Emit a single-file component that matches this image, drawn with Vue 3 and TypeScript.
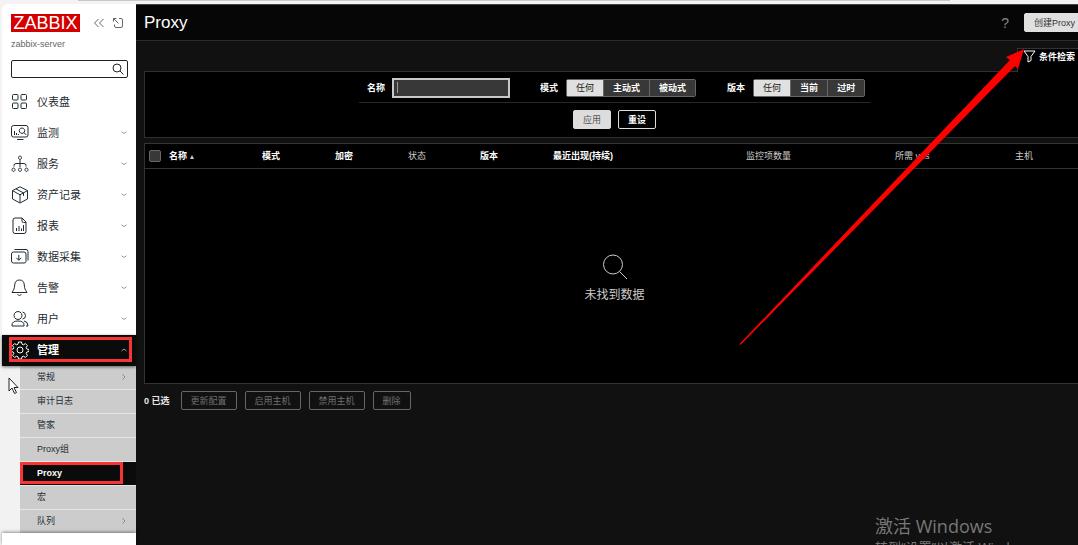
<script setup lang="ts">
import { ref } from 'vue'

interface MenuItem {
  id: string
  label: string
  expandable: boolean
  paths: string[]
}

const menu: MenuItem[] = [
  { id: 'dashboard', label: '仪表盘', expandable: false, paths: ['M2.500 1.500h3.500q1 0 1 1v3.500q0 1-1 1h-3.500q-1 0-1-1v-3.500q0-1 1-1z', 'M11 1.500h3.500q1 0 1 1v3.500q0 1-1 1h-3.500q-1 0-1-1v-3.500q0-1 1-1z', 'M2.500 10h3.500q1 0 1 1v3.500q0 1-1 1h-3.500q-1 0-1-1v-3.500q0-1 1-1z', 'M11 10h3.500q1 0 1 1v3.500q0 1-1 1h-3.500q-1 0-1-1v-3.500q0-1 1-1z'] },
  { id: 'monitoring', label: '监测', expandable: true, paths: ['M2.500 1.500h12.500q2 0 2 2v7.500q0 2-2 2h-12.500q-2 0-2-2v-7.500q0-2 2-2z', 'M6 15.500h6.500', 'M3.500 7v4M5.500 9v2M7.500 10v1', 'M11 4a2.700 2.700 0 1 0 .01 0M12.800 8.500l2.500 2.500'] },
  { id: 'services', label: '服务', expandable: true, paths: ['M9 1a1.500 1.700 0 1 0 .01 0', 'M9 4.500v7.500M3 11.500v-1q0-2 2-2h8q2 0 2 2v1', 'M2.500 13a1.500 1.700 0 1 0 .01 0', 'M9 13a1.500 1.700 0 1 0 .01 0', 'M15.500 13a1.500 1.700 0 1 0 .01 0'] },
  { id: 'inventory', label: '资产记录', expandable: true, paths: ['M9 .8l7.500 3.800v8.400l-7.500 4-7.500-4v-8.400z', 'M1.500 4.600l7.500 4.200 7.500-4.200M9 8.800v8.200', 'M5 2.900l7.500 4v3'] },
  { id: 'reports', label: '报表', expandable: true, paths: ['M4 1h7l4 4v9.500q0 2-2 2h-9q-2 0-2-2v-11.500q0-2 2-2z', 'M11 1v3q0 1.500 1.500 1.500h2.500', 'M5.500 11v3M8 9v5M10.500 11.500v2.500M12.500 8v6'] },
  { id: 'collection', label: '数据采集', expandable: true, paths: ['M2.500 4h10.500q2 0 2 2v7.500q0 1.500-2 1.500h-10.500q-2 0-2-2v-7q0-2 2-2z', 'M3.500 1.500h11.500q2 0 2 2v9', 'M7.800 7v5M5.300 9.800l2.500 2.500 2.500-2.500'] },
  { id: 'alerts', label: '告警', expandable: true, paths: ['M8.500 1q4.500 0 4.800 5c.2 3.500 1 5 2.700 7.500h-15c1.700-2.500 2.500-4 2.700-7.500q.3-5 4.800-5z', 'M6.500 15.500q2 2 4 0'] },
  { id: 'users', label: '用户', expandable: true, paths: ['M7 1.500a4 4 0 1 0 .01 0', 'M1 16v-1q0-4 6-4t6 4v1z', 'M11.500 2q3 .5 3 3.700t-3 3.300', 'M13 11q4 .5 4 5h-2'] }
]

const submenu = [
  { label: '常规', more: true },
  { label: '审计日志', more: false },
  { label: '管家', more: false },
  { label: 'Proxy组', more: false },
  { label: 'Proxy', more: false },
  { label: '宏', more: false },
  { label: '队列', more: true }
]

const columns = [
  { label: '模式', cls: 'c-mode', strong: true },
  { label: '加密', cls: 'c-enc', strong: true },
  { label: '状态', cls: 'c-state', strong: false },
  { label: '版本', cls: 'c-ver', strong: true },
  { label: '最近出现(持续)', cls: 'c-seen', strong: true },
  { label: '监控项数量', cls: 'c-items', strong: false },
  { label: '所需 vps', cls: 'c-vps', strong: false },
  { label: '主机', cls: 'c-hosts', strong: false }
]

const modes = ['任何', '主动式', '被动式']
const versions = ['任何', '当前', '过时']
const actions = ['更新配置', '启用主机', '禁用主机', '删除']

const mode = ref(0)
const version = ref(0)
const name = ref('')
const search = ref('')
</script>

<template>
  <div class="page">
    <div class="strip"><div class="strip-line"></div></div>
    <div class="layout">
      <aside class="sidebar">
        <div class="brand">
          <a class="logo" href="#">ZABBIX</a>
          <button class="tool first" aria-label="收起侧边栏">
            <svg width="12" height="12" viewBox="0 0 12 12"><path d="M5.500 2l-4 4 4 4M10.500 2l-4 4 4 4" /></svg>
          </button>
          <button class="tool" aria-label="隐藏侧边栏">
            <svg width="12" height="12" viewBox="0 0 12 12"><path d="M7 1.500h2q1.500 0 1.500 1.500v6q0 1.500-1.500 1.500h-5q-1.500 0-1.500-1.500v-1.500M1.500 4.500v-3h3M1.500 1.500l5 5" /></svg>
          </button>
        </div>
        <div class="server">zabbix-server</div>
        <form class="search" @submit.prevent>
          <input v-model="search" type="text" aria-label="搜索" />
          <button aria-label="搜索">
            <svg width="14" height="14" viewBox="0 0 14 14"><circle cx="6" cy="6" r="4" /><path d="M9 9l3.500 3.500" /></svg>
          </button>
        </form>
        <nav>
          <a v-for="item in menu" :key="item.id" class="item" href="#">
            <svg class="icon" width="18" height="18" viewBox="0 0 18 18"><path v-for="(d, i) in item.paths" :key="i" :d="d" /></svg>
            <span>{{ item.label }}</span>
            <svg v-if="item.expandable" class="chev" width="6" height="4" viewBox="0 0 6 4"><path d="M.5 .8l2.500 1.700 2.500-1.700" /></svg>
          </a>
          <a class="item current" href="#">
            <svg class="icon" width="18" height="18" viewBox="0 0 18 18">
              <path d="M7.500 1h3l.5 2.200 1.400.6 2-1.200 2 2-1.200 2 .6 1.400 2.200.5v2l-2.200.5-.6 1.400 1.200 2-2 2-2-1.200-1.400.6-.5 2.200h-3l-.5-2.200-1.400-.6-2 1.200-2-2 1.200-2-.6-1.400-2.200-.5v-2l2.200-.5.6-1.400-1.200-2 2-2 2 1.200 1.400-.6z" />
              <circle cx="9" cy="9" r="3" />
            </svg>
            <span>管理</span>
            <svg class="chev" width="6" height="4" viewBox="0 0 6 4"><path d="M.5 3l2.500-2 2.500 2" /></svg>
            <i class="mark mark-admin"></i>
          </a>
          <div class="submenu">
            <a v-for="s in submenu" :key="s.label" class="sub" :class="{ active: s.label === 'Proxy' }" href="#">
              <span>{{ s.label }}</span>
              <svg v-if="s.more" width="4" height="6" viewBox="0 0 4 6"><path d="M.5 .5l2.500 2.500-2.500 2.500" /></svg>
              <i v-if="s.label === 'Proxy'" class="mark mark-proxy"></i>
            </a>
          </div>
        </nav>
        <div class="foot"></div>
      </aside>

      <main class="main">
        <header class="head">
          <h1>Proxy</h1>
          <a class="help" href="#" aria-label="帮助">?</a>
          <button class="create">创建Proxy</button>
        </header>

        <div class="tabs">
          <button class="tab">
            <svg width="13" height="13" viewBox="0 0 13 13"><path d="M1 1h11l-4 5.500v4l-3 1.500v-5.500z" /></svg>
            <span>条件检索</span>
          </button>
        </div>
        <form class="filter" @submit.prevent>
          <div class="fields">
            <label for="name">名称</label>
            <div class="text"><input id="name" v-model="name" type="text" /><i class="caret"></i></div>
            <span class="legend">模式</span>
            <div class="seg" role="group" aria-label="模式">
              <label v-for="(m, i) in modes" :key="m" :class="{ on: mode === i }"><input v-model="mode" type="radio" name="mode" :value="i" />{{ m }}</label>
            </div>
            <span class="legend">版本</span>
            <div class="seg" role="group" aria-label="版本">
              <label v-for="(v, i) in versions" :key="v" :class="{ on: version === i }"><input v-model="version" type="radio" name="version" :value="i" />{{ v }}</label>
            </div>
          </div>
          <div class="submit">
            <button class="apply">应用</button>
            <button class="reset" type="button">重设</button>
          </div>
        </form>

        <section class="list">
          <table>
            <thead>
              <tr>
                <th class="c-check"><input type="checkbox" aria-label="全选" /></th>
                <th class="c-name strong"><a href="#">名称<i class="sort"></i></a></th>
                <th v-for="c in columns" :key="c.label" :class="[c.cls, { strong: c.strong }]">{{ c.label }}</th>
              </tr>
            </thead>
            <tbody>
              <tr>
                <td colspan="10">
                  <svg width="26" height="26" viewBox="0 0 26 26"><circle cx="11" cy="10.500" r="9.500" /><path d="M17.500 17.500l7.500 7.500" /></svg>
                  <div>未找到数据</div>
                </td>
              </tr>
            </tbody>
          </table>
        </section>

        <div class="actions">
          <span>0 已选</span>
          <button v-for="a in actions" :key="a" disabled>{{ a }}</button>
        </div>
      </main>
    </div>

    <div class="watermark">
      <div class="wm-title">激活 Windows</div>
      <div class="wm-text">转到“设置”以激活 Windows</div>
    </div>
    <svg class="arrow" width="288" height="300" viewBox="0 0 288 300"><path d="M285 1L267 9l4 3L.5 296l1 1L276 18l3 3z" /></svg>
    <svg class="pointer" width="12" height="18" viewBox="0 0 12 18"><path d="M1 1v13l3-3 2.500 5.500 2-1-2.500-5h4z" /></svg>
  </div>
</template>

<style>
body {
  margin: 0;
  background: #111;
}
</style>

<style scoped>
* {
  box-sizing: border-box;
}
.page {
  position: relative;
  display: flex;
  flex-direction: column;
  height: 100vh;
  overflow: hidden;
  background: #f3f3f3;
  color: #e8e8e8;
  font: 9px/12px "Liberation Sans", "Noto Sans CJK SC", sans-serif;
}
button,
input {
  margin: 0;
  padding: 0;
  font: inherit;
}
button,
label,
.legend {
  white-space: nowrap;
}
a {
  color: inherit;
  text-decoration: none;
}
svg {
  fill: none;
  stroke: currentColor;
  flex: none;
}
.strip {
  flex: none;
  height: 4px;
  padding: 0 128px 0 78px;
}
.strip-line {
  height: 1px;
  background: #c9c9cb;
}
.layout {
  display: flex;
  flex: 1;
  min-height: 0;
  padding-left: 2px;
}
.sidebar {
  display: flex;
  flex-direction: column;
  flex: none;
  width: 134px;
  background: #fff;
  border-top-left-radius: 6px;
  color: #1f2c33;
}
.brand {
  display: flex;
  align-items: center;
  height: 18px;
  margin: 10px 10px 0 9px;
}
.logo {
  width: 69px;
  background: #d40000;
  color: #fff;
  font-size: 18px;
  line-height: 18px;
  text-align: center;
}
.tool {
  display: flex;
  margin-left: 7px;
  border: 0;
  background: none;
  color: #666;
}
.tool.first {
  margin-left: 13px;
}
.server {
  margin: 6px 9px 0;
  color: #666;
}
.search {
  display: flex;
  align-items: center;
  height: 18px;
  margin: 10px 8px 9px 9px;
  border: 1px solid #222;
  border-radius: 2px;
}
.search input {
  flex: 1;
  min-width: 0;
  border: 0;
  outline: 0;
  background: none;
}
.search button {
  display: flex;
  margin-right: 2px;
  border: 0;
  background: none;
  color: #222;
}
.item {
  position: relative;
  display: flex;
  align-items: center;
  height: 31px;
  padding: 0 9px 1px;
  font-size: 11px;
}
.icon {
  margin-right: 8px;
}
.item span {
  flex: 1;
}
.chev {
  color: #99a;
}
.current {
  z-index: 1;
  background: #0b0b0b;
  color: #fff;
  font-weight: bold;
  box-shadow: 0 1px 3px #0008;
}
.submenu {
  display: flex;
  flex-direction: column;
  gap: 1px;
  padding-left: 18px;
  background: linear-gradient(90deg, #f2f2f2 18px, #e6e6e6 18px);
}
.sub {
  position: relative;
  display: flex;
  align-items: center;
  justify-content: space-between;
  height: 23px;
  padding: 0 10px 1px 17px;
  background: #ccc;
}
.sub svg {
  color: #888;
}
.sub.active {
  background: #0b0b0b;
  color: #fff;
  font-weight: bold;
}
.foot {
  z-index: 1;
  flex: 1;
  background: #fff;
  box-shadow: 0 -1px 3px #0006;
}
.mark {
  position: absolute;
  border: 3px solid #f93434;
}
.mark-admin {
  inset: 2px 4px 4px 7px;
}
.mark-proxy {
  inset: 0 13px 1px 0;
}
.main {
  flex: 1;
  min-width: 0;
  margin-right: -7px;
  border-top: 1px solid #444;
  background: #111;
}
.head {
  display: flex;
  align-items: center;
  height: 36px;
  padding-left: 8px;
  border-bottom: 1px solid #2b2b2b;
  background: #060606;
}
h1 {
  flex: 1;
  margin: 0;
  color: #fff;
  font-size: 17px;
  font-weight: normal;
  line-height: 20px;
}
.help {
  margin-right: 15px;
  color: #888;
  font-size: 14px;
}
.create {
  height: 19px;
  padding: 0 9px;
  border: 1px solid #e0e0e0;
  border-radius: 2px;
  background: #e0e0e0;
  color: #333;
}
.tabs {
  display: flex;
  justify-content: flex-end;
  height: 30px;
  padding-top: 7px;
}
.tab {
  z-index: 1;
  display: flex;
  align-items: center;
  gap: 3px;
  height: 24px;
  padding: 0 10px 8px 5px;
  border: 1px solid #333;
  border-width: 1px 0 0 1px;
  background: #000;
  color: #fff;
  font-weight: bold;
}
.filter {
  height: 67px;
  margin-left: 8px;
  padding-top: 6px;
  border: 1px solid #2f2f2f;
  background: #000;
}
.fields {
  display: flex;
  align-items: center;
  width: 511px;
  height: 25px;
  margin: 0 auto;
  padding: 0 0 4px 8px;
  border-bottom: 1px solid #282828;
  color: #fff;
  font-weight: bold;
}
.text {
  position: relative;
  flex: none;
  width: 118px;
  margin: 0 30px 0 7px;
}
.text input {
  display: block;
  width: 100%;
  height: 20px;
  padding: 0 4px;
  border: 2px solid #c8c8c8;
  outline: 0;
  background: #383838;
  color: #fff;
}
.caret {
  position: absolute;
  top: 4px;
  left: 5px;
  width: 1px;
  height: 11px;
  background: #999;
}
.legend {
  margin-right: 8px;
}
.seg {
  display: flex;
  height: 18px;
  margin-right: 31px;
  border: 1px solid #666;
  border-radius: 2px;
}
.seg:last-child {
  margin-right: 0;
}
.seg label {
  display: flex;
  align-items: center;
  padding: 0 9px;
  background: #383838;
}
.seg label + label {
  border-left: 1px solid #666;
}
.seg .on {
  background: #e0e0e0;
  color: #222;
  font-weight: normal;
}
.seg input {
  position: absolute;
  opacity: 0;
  pointer-events: none;
}
.submit {
  display: flex;
  justify-content: center;
  gap: 7px;
  margin-top: 7px;
}
.submit button {
  width: 38px;
  height: 19px;
  border: 1px solid #ddd;
  border-radius: 2px;
}
.apply {
  background: #ddd;
  color: #555;
}
.reset {
  background: #000;
  color: #fff;
  font-weight: bold;
}
.list {
  margin: 5px 0 0 8px;
  border: 1px solid #333;
  background: #000;
}
table {
  width: 100%;
  border-collapse: collapse;
  table-layout: fixed;
}
th {
  height: 24px;
  padding: 1px 0 0;
  border-bottom: 1px solid #333;
  color: #ccc;
  font-weight: normal;
  text-align: left;
  white-space: nowrap;
}
.strong {
  color: #fff;
  font-weight: bold;
}
.c-check { width: 24px; }
.c-name { width: 93px; }
.c-mode, .c-enc, .c-ver { width: 73px; }
.c-state { width: 72px; }
.c-seen { width: 193px; }
.c-items { width: 149px; }
.c-vps { width: 120px; }
th input {
  display: block;
  width: 12px;
  height: 12px;
  margin-left: 4px;
  appearance: none;
  border: 1px solid #666;
  border-radius: 2px;
  background: #383838;
}
.sort {
  display: inline-block;
  margin-left: 3px;
  border: 2px solid transparent;
  border-top: 0;
  border-bottom: 4px solid #ccc;
}
td {
  height: 215px;
  padding: 0;
  color: #ccc;
  font-size: 12px;
  line-height: 18px;
  text-align: center;
}
td svg {
  display: block;
  margin: 7px auto 6px;
}
.actions {
  display: flex;
  align-items: center;
  gap: 8px;
  margin: 7px 0 0 8px;
}
.actions span {
  margin-right: 3px;
  font-weight: bold;
}
.actions button {
  height: 19px;
  padding: 0 9px;
  border: 1px solid #666;
  border-radius: 2px;
  background: none;
  color: #707070;
}
.watermark {
  position: absolute;
  top: 514px;
  left: 875px;
  color: #777;
  font-family: "Open Sans", "Noto Sans CJK SC", sans-serif;
  white-space: nowrap;
}
.wm-title {
  font-size: 18px;
  line-height: 24px;
}
.wm-text {
  font-size: 13px;
  line-height: 18px;
}
.arrow {
  position: absolute;
  top: 48px;
  left: 739px;
  z-index: 3;
  fill: #f00;
  stroke: none;
}
.pointer {
  position: absolute;
  top: 377px;
  left: 8px;
  z-index: 3;
  fill: #fff;
  stroke: #222;
}
</style>
